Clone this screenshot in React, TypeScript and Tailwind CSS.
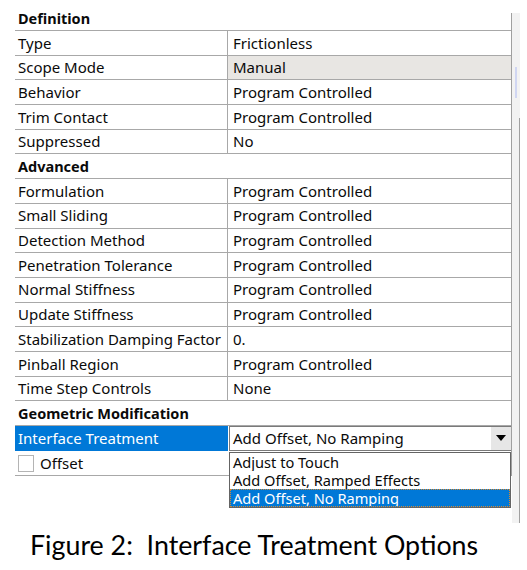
import React from "react";

const font = { fontFamily: '"Noto Sans", "Open Sans", sans-serif' };

type Row =
  | { kind: "header"; label: string; first?: boolean }
  | { kind: "row"; label: string; value: string; gray?: boolean };

const rows: Row[] = [
  { kind: "header", label: "Definition", first: true },
  { kind: "row", label: "Type", value: "Frictionless" },
  { kind: "row", label: "Scope Mode", value: "Manual", gray: true },
  { kind: "row", label: "Behavior", value: "Program Controlled" },
  { kind: "row", label: "Trim Contact", value: "Program Controlled" },
  { kind: "row", label: "Suppressed", value: "No" },
  { kind: "header", label: "Advanced" },
  { kind: "row", label: "Formulation", value: "Program Controlled" },
  { kind: "row", label: "Small Sliding", value: "Program Controlled" },
  { kind: "row", label: "Detection Method", value: "Program Controlled" },
  { kind: "row", label: "Penetration Tolerance", value: "Program Controlled" },
  { kind: "row", label: "Normal Stiffness", value: "Program Controlled" },
  { kind: "row", label: "Update Stiffness", value: "Program Controlled" },
  { kind: "row", label: "Stabilization Damping Factor", value: "0." },
  { kind: "row", label: "Pinball Region", value: "Program Controlled" },
  { kind: "row", label: "Time Step Controls", value: "None" },
  { kind: "header", label: "Geometric Modification" },
];

export default function App() {
  return (
    <div
      className="relative w-[527px] h-[570px] bg-white text-[#0a0a0a] overflow-hidden"
      style={font}
    >
      <div className="flex items-start pt-[13px]">
        <div className="ml-[15px] w-[497px] border-r border-[#a0a0a0] text-[15px]">
          {rows.map((r, i) =>
            r.kind === "header" ? (
              <div
                key={i}
                className={`flex items-end border-b border-[#a8a8a8] ${
                  r.first ? "h-[18px]" : "h-[24.7px]"
                }`}
              >
                <div className="pl-[3px] font-bold leading-[24px] text-[14.5px]">
                  {r.label}
                </div>
              </div>
            ) : (
              <div
                key={i}
                className="flex h-[24.7px] border-b border-[#a8a8a8]"
              >
                <div className="w-[213px] border-r border-[#a8a8a8] pl-[3px] flex items-center whitespace-nowrap">
                  {r.label}
                </div>
                <div
                  className={`flex-1 pl-[5px] flex items-center ${
                    r.gray ? "bg-[#e8e6e3]" : ""
                  }`}
                >
                  {r.value}
                </div>
              </div>
            )
          )}
          <div className="flex h-[24.7px]">
            <div className="w-[213px] bg-[#0078d7] text-white pl-[3px] flex items-center">
              Interface Treatment
            </div>
            <div className="flex-1 ml-[1px] border-l border-t border-b border-[#7a7a7a] flex items-center">
              <div className="flex-1 pl-[3px]">Add Offset, No Ramping</div>
              <div className="w-[20px] h-full bg-[#e6e6e6] flex items-center justify-center">
                <svg width="10" height="6" viewBox="0 0 10 6">
                  <path d="M0 0 L10 0 L5 6 Z" fill="#000" />
                </svg>
              </div>
            </div>
          </div>
          <div className="flex h-[25.7px] border-b border-[#a8a8a8]">
            <div className="w-[213px] flex items-center pl-[3px]">
              <div className="w-[16px] h-[17px] border border-[#b4b4b4] bg-white" />
              <span className="ml-[6px]">Offset</span>
            </div>
            <div className="flex-1" />
          </div>
        </div>
        <div className="w-[8px] h-[510px] bg-[#f2f2f2] flex flex-col">
          <div className="h-[54px]" />
          <div className="h-[31px] w-[2px] ml-[3px] bg-[#d0d6f2]" />
          <div className="h-[20px]" />
          <div className="flex-1 border-r border-[#a0a0a0]" />
        </div>
      </div>

      <div className="absolute left-[229px] top-[452px] w-[282px] h-[56px] border border-[#646464] bg-white text-[14.6px] leading-[18px]">
        <div className="h-[18px] pl-[3px] overflow-hidden">Adjust to Touch</div>
        <div className="h-[18px] pl-[3px] overflow-hidden">Add Offset, Ramped Effects</div>
        <div className="h-[18px] pl-[2px] bg-[#0078d7] text-white border border-dotted border-[#d9892f] leading-[16px] overflow-hidden">
          Add Offset, No Ramping
        </div>
      </div>

      <div
        className="ml-[30px] mt-[6px] text-[26.8px] leading-[32px] text-black"
        style={{ fontFamily: 'Lato, "Open Sans", sans-serif' }}
      >
        Figure 2:&nbsp; Interface Treatment Options
      </div>
    </div>
  );
}
